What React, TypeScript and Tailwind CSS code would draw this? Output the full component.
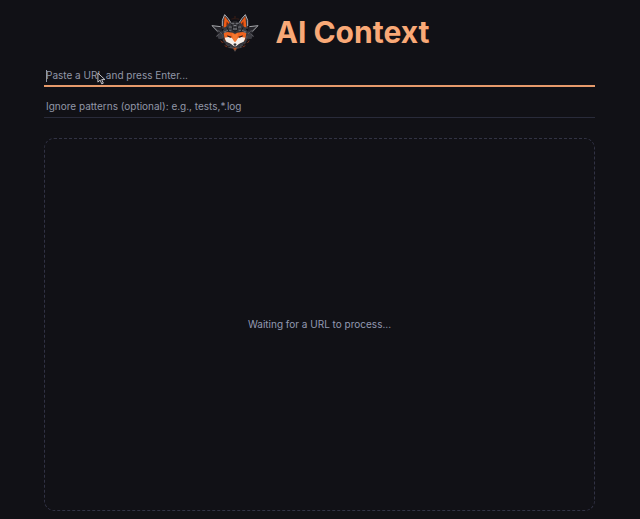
function FoxLogo() {
  return (
    <svg viewBox="18 18 150 120" className="h-10 w-[50px] shrink-0" role="img" aria-label="Fox logo">
      {/* orbit and side wings */}
      <circle cx="93" cy="82" r="44" fill="none" stroke="#4a2114" strokeWidth="2" strokeDasharray="9 6" />
      <path d="M22 58 L50 60 L58 80 L42 84 Z" fill="#24242a" />
      <path d="M164 58 L136 60 L128 80 L144 84 Z" fill="#24242a" />
      <path d="M42 77 L24 59 L50 62" fill="none" stroke="#a3a4a8" strokeWidth="3" />
      <path d="M144 77 L162 59 L136 62" fill="none" stroke="#a3a4a8" strokeWidth="3" />
      <path d="M38 88 L55 74 L57 98 L44 99 Z M148 88 L131 74 L129 98 L142 99 Z" fill="#3c3c42" />
      <path d="M36 92 L46 84 M150 92 L140 84 M43 72 L54 84 M143 72 L132 84" stroke="#66676c" strokeWidth="2" />
      {/* collar ring */}
      <circle cx="93" cy="88" r="36" fill="#1c1c21" stroke="#4a4b51" strokeWidth="5" strokeDasharray="12 3" />
      <path d="M58 98 Q66 118 93 122 Q120 118 128 98" fill="none" stroke="#36373d" strokeWidth="5" />
      <path d="M50 104 L56 111 M136 104 L130 111 M62 119 L70 123 M124 119 L116 123" stroke="#77321b" strokeWidth="3" />
      {/* ears */}
      <path d="M54 68 L54 42 L62 24 L82 50 L76 70 Z" fill="#3a3a3f" />
      <path d="M132 68 L132 42 L124 24 L104 50 L110 70 Z" fill="#3a3a3f" />
      <path d="M59 64 L62 31 L78 52 L72 64 Z M127 64 L124 31 L108 52 L114 64 Z" fill="#ef5a14" />
      <path d="M67 60 L68 46 L74 54 Z M119 60 L118 46 L112 54 Z" fill="#6e2813" />
      <path d="M55 60 L55 43 L62 26 L72 37 L81 51" fill="none" stroke="#adadb2" strokeWidth="3" />
      <path d="M131 60 L131 43 L124 26 L114 37 L105 51" fill="none" stroke="#adadb2" strokeWidth="3" />
      {/* helmet */}
      <path d="M57 80 L64 64 L76 51 L93 45 L110 51 L122 64 L129 80 L125 96 L61 96 Z" fill="#37383d" />
      <path d="M82 53 H104 M75 63 H86 M100 63 H111 M67 73 H82 M104 73 H119" stroke="#74757b" strokeWidth="3" />
      <path d="M93 45 V79 M83 54 L88 75 M103 54 L98 75 M69 64 L76 78 M117 64 L110 78" stroke="#18191d" strokeWidth="3" />
      <path d="M89 59 H97 M87 69 H99" stroke="#929399" strokeWidth="3" />
      <circle cx="64" cy="78" r="4" fill="#696a70" />
      <circle cx="122" cy="78" r="4" fill="#696a70" />
      <path d="M93 30 V40" stroke="#5b2817" strokeWidth="2" />
      {/* face */}
      <path d="M59 82 L70 78 L86 80 L93 84 L100 80 L116 78 L127 82 L123 103 L106 112 L93 121 L80 112 L63 103 Z" fill="#f0641f" />
      <path d="M62 95 L74 93 L84 96 L88 102 L93 108 L98 102 L102 96 L112 93 L124 95 L119 107 L106 113 L96 121 H90 L80 113 L67 107 Z" fill="#f5eee8" />
      <path d="M84 82 L93 86 L102 82 L99 101 L93 108 L87 101 Z" fill="#f57a32" />
      <path d="M69 88 L83 92 L80 95 L71 92 Z M117 88 L103 92 L106 95 L115 92 Z" fill="#202025" />
      <path d="M88 114 L93 112 L98 114 L95 119 H91 Z" fill="#303137" />
      {/* pendant */}
      <path d="M73 124 L88 127 L93 136 L98 127 L113 124" fill="none" stroke="#606065" strokeWidth="2" />
      <path d="M87 125 H99 L93 134 Z" fill="#b9501f" />
    </svg>
  );
}

function Pointer() {
  return (
    <svg viewBox="0 0 10 14" className="pointer-events-none absolute top-2 left-[53px] h-[13px] w-[9px]" aria-hidden="true">
      <path d="M1 1 V11 L3.5 8.8 L5.3 13 L7 12.2 L5.2 8.2 H8.8 Z" fill="#111116" stroke="#d4d4d9" strokeWidth="1" />
    </svg>
  );
}

export default function App() {
  return (
    <main className="flex min-h-screen flex-col bg-[#111116] pt-2 pr-[45px] pb-2 pl-11 font-['Inter',sans-serif] text-[#9399b2]">
      <header className="flex h-12 items-center justify-center gap-4">
        <FoxLogo />
        <h1 className="text-3xl font-bold text-[#f9a977]">AI Context</h1>
      </header>

      <form className="mt-2 flex flex-col gap-2" onSubmit={(e) => e.preventDefault()}>
        <div className="relative">
          <input
            type="text"
            aria-label="URL"
            placeholder="Paste a URL and press Enter..."
            className="block h-[23px] w-full border-b-2 border-[#e69a6b] bg-transparent px-0.5 text-[10px] outline-none placeholder:text-[#9297a8]"
          />
          <span className="pointer-events-none absolute top-1.5 left-0.5 h-3 w-px bg-[#9297a8]" aria-hidden="true" />
          <Pointer />
        </div>
        <input
          type="text"
          aria-label="Ignore patterns"
          placeholder="Ignore patterns (optional): e.g., tests,*.log"
          className="block h-[23px] w-full border-b border-[#292b3a] bg-transparent px-0.5 text-[10px] outline-none placeholder:text-[#9297a8]"
        />
      </form>

      <section className="mt-5 flex flex-1 items-center justify-center rounded-[10px] border border-dashed border-[#313244]">
        <p className="text-[10px]">Waiting for a URL to process...</p>
      </section>
    </main>
  );
}
